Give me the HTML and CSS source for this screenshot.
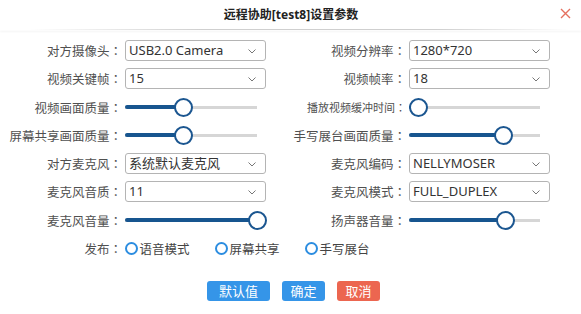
FILE: index.html
```html
<!DOCTYPE html>
<html lang="zh-CN">
<head>
  <meta charset="UTF-8">
  <meta name="viewport" content="width=device-width, initial-scale=1.0">
  <title>远程协助设置参数</title>
  <link rel="stylesheet" href="styles.css">
</head>
<body>
  <div class="dialog">
    <div class="dialog-header">
      <span></span>
      <div class="dialog-title">远程协助[test8]设置参数</div>
      <button class="close-btn" aria-label="关闭">
        <svg width="11" height="11" viewBox="0 0 11 11"><path d="M1 1L10 10M10 1L1 10" stroke="#e5705f" stroke-width="1.4" fill="none"/></svg>
      </button>
    </div>
    <div class="divider"></div>

    <div class="form-grid">
      <label class="field-label">对方摄像头<span class="colon">：</span></label>
      <div class="cell"><div class="select"><span>USB2.0 Camera</span><svg class="chev" width="8" height="5" viewBox="0 0 8 5"><path d="M0.5 0.5L4 4L7.5 0.5" stroke="#777" fill="none"/></svg></div></div>
      <label class="field-label">视频分辨率<span class="colon">：</span></label>
      <div class="cell"><div class="select"><span>1280*720</span><svg class="chev" width="8" height="5" viewBox="0 0 8 5"><path d="M0.5 0.5L4 4L7.5 0.5" stroke="#777" fill="none"/></svg></div></div>

      <label class="field-label">视频关键帧<span class="colon">：</span></label>
      <div class="cell"><div class="select"><span>15</span><svg class="chev" width="8" height="5" viewBox="0 0 8 5"><path d="M0.5 0.5L4 4L7.5 0.5" stroke="#777" fill="none"/></svg></div></div>
      <label class="field-label">视频帧率<span class="colon">：</span></label>
      <div class="cell"><div class="select"><span>18</span><svg class="chev" width="8" height="5" viewBox="0 0 8 5"><path d="M0.5 0.5L4 4L7.5 0.5" stroke="#777" fill="none"/></svg></div></div>

      <label class="field-label">视频画面质量<span class="colon">：</span></label>
      <div class="cell"><div class="slider"><div class="fill" style="width:58px"></div><span class="thumb"></span></div></div>
      <label class="field-label small">播放视频缓冲时间<span class="colon">：</span></label>
      <div class="cell"><div class="slider narrow"><div class="fill" style="width:9.5px"></div><span class="thumb"></span></div></div>

      <label class="field-label">屏幕共享画面质量<span class="colon">：</span></label>
      <div class="cell"><div class="slider"><div class="fill" style="width:58px"></div><span class="thumb"></span></div></div>
      <label class="field-label">手写展台画面质量<span class="colon">：</span></label>
      <div class="cell"><div class="slider narrow"><div class="fill" style="width:94px"></div><span class="thumb"></span></div></div>

      <label class="field-label">对方麦克风<span class="colon">：</span></label>
      <div class="cell"><div class="select"><span>系统默认麦克风</span><svg class="chev" width="8" height="5" viewBox="0 0 8 5"><path d="M0.5 0.5L4 4L7.5 0.5" stroke="#777" fill="none"/></svg></div></div>
      <label class="field-label">麦克风编码<span class="colon">：</span></label>
      <div class="cell"><div class="select"><span>NELLYMOSER</span><svg class="chev" width="8" height="5" viewBox="0 0 8 5"><path d="M0.5 0.5L4 4L7.5 0.5" stroke="#777" fill="none"/></svg></div></div>

      <label class="field-label">麦克风音质<span class="colon">：</span></label>
      <div class="cell"><div class="select"><span>11</span><svg class="chev" width="8" height="5" viewBox="0 0 8 5"><path d="M0.5 0.5L4 4L7.5 0.5" stroke="#777" fill="none"/></svg></div></div>
      <label class="field-label">麦克风模式<span class="colon">：</span></label>
      <div class="cell"><div class="select"><span>FULL_DUPLEX</span><svg class="chev" width="8" height="5" viewBox="0 0 8 5"><path d="M0.5 0.5L4 4L7.5 0.5" stroke="#777" fill="none"/></svg></div></div>

      <label class="field-label">麦克风音量<span class="colon">：</span></label>
      <div class="cell"><div class="slider"><div class="fill" style="width:132px"></div><span class="thumb"></span></div></div>
      <label class="field-label">扬声器音量<span class="colon">：</span></label>
      <div class="cell"><div class="slider narrow"><div class="fill" style="width:96px"></div><span class="thumb"></span></div></div>

      <label class="field-label">发布<span class="colon">：</span></label>
      <div class="cell radio-group">
        <span class="radio"><span class="radio-dot"></span>语音模式</span>
        <span class="radio"><span class="radio-dot"></span>屏幕共享</span>
        <span class="radio"><span class="radio-dot"></span>手写展台</span>
      </div>
    </div>

    <div class="actions">
      <button class="btn btn-blue btn-wide">默认值</button>
      <button class="btn btn-blue">确定</button>
      <button class="btn btn-red">取消</button>
    </div>
  </div>
</body>
</html>
```

FILE: styles.css
```css
body {
  margin: 0;
  background: #fff;
  font-family: "Noto Sans", "Noto Sans CJK SC", sans-serif;
}
.dialog {
  width: 581px;
  height: 314px;
  background: #fff;
  overflow: hidden;
}
.dialog-header {
  display: grid;
  grid-template-columns: 1fr auto 1fr;
  align-items: center;
  height: 28px;
}
.dialog-title {
  font-size: 12px;
  font-weight: bold;
  color: #222;
  padding-left: 1px;
}
.close-btn {
  justify-self: end;
  margin-right: 10px;
  margin-top: -1px;
  padding: 0;
  border: 0;
  background: none;
  width: 11px;
  height: 11px;
  display: flex;
}
.divider {
  margin-top: 1px;
  height: 1px;
  background: linear-gradient(to right, rgba(200,200,200,0) 5%, #cfcfcf 35%, #cfcfcf 75%, rgba(200,200,200,0) 98%);
  box-shadow: 0 2px 2px rgba(0, 0, 0, 0.06);
}
.form-grid {
  display: grid;
  grid-template-columns: 122px 144px 140px 144px;
  grid-auto-rows: 21px;
  row-gap: 7.3px;
  padding-top: 10px;
}
.field-label {
  display: flex;
  align-items: center;
  justify-content: flex-end;
  font-family: "Noto Sans CJK SC", sans-serif;
  font-size: 12.5px;
  color: #505050;
  white-space: nowrap;
}
.field-label.small {
  font-size: 11px;
}
.colon {
  font-family: "Noto Sans CJK TC", sans-serif;
}
.cell {
  padding-left: 3px;
  display: flex;
  align-items: center;
}
.select {
  box-sizing: border-box;
  width: 141px;
  height: 21px;
  border: 1px solid #b4b4b4;
  border-radius: 3px;
  display: flex;
  align-items: center;
  justify-content: space-between;
  padding: 0 9px 0 3px;
  font-size: 13px;
  color: #333;
  font-family: "Noto Sans", "Noto Sans CJK SC", sans-serif;
}
.select span {
  line-height: 19px;
}
.chev {
  margin-top: 1px;
}
.slider {
  width: 132px;
  height: 21px;
  display: flex;
  align-items: center;
  background: linear-gradient(#d6d6d6, #d6d6d6) center / 100% 3px no-repeat;
}
.slider.narrow {
  width: 131px;
}
.fill {
  height: 4px;
  background: #17558f;
  border-radius: 2px;
  flex: none;
}
.thumb {
  flex: none;
  box-sizing: border-box;
  width: 19px;
  height: 19px;
  margin-left: -9.5px;
  border: 2px solid #1b5690;
  border-radius: 50%;
  background: #fff;
}
.radio-group {
  grid-column: 2 / 5;
  gap: 25px;
  font-family: "Noto Sans CJK SC", sans-serif;
  font-size: 12.5px;
  color: #444;
  padding-left: 2.5px;
}
.radio {
  display: flex;
  align-items: center;
  gap: 2px;
}
.radio-dot {
  box-sizing: border-box;
  width: 13px;
  height: 13px;
  border: 2px solid #2c8de0;
  border-radius: 50%;
  background: #fff;
}
.actions {
  display: flex;
  justify-content: center;
  gap: 12px;
  padding-left: 6px;
  margin-top: 21.5px;
}
.btn {
  height: 20px;
  width: 43px;
  border: 0;
  border-radius: 3px;
  color: #fff;
  font-family: "Noto Sans CJK SC", sans-serif;
  font-size: 13px;
  padding: 0;
  line-height: 20px;
}
.btn-wide {
  width: 63px;
}
.btn-blue {
  background: #3595e8;
}
.btn-red {
  background: #ec6650;
}
```
